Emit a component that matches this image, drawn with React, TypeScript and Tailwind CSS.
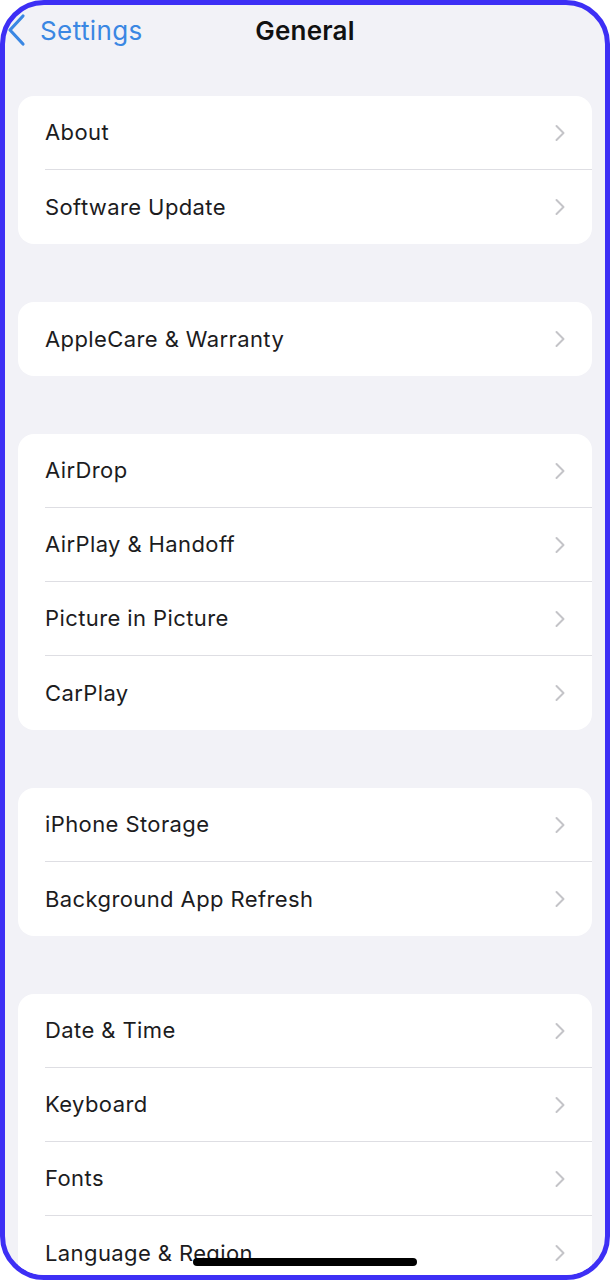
import React from 'react';

const groups: string[][] = [
  ['About', 'Software Update'],
  ['AppleCare & Warranty'],
  ['AirDrop', 'AirPlay & Handoff', 'Picture in Picture', 'CarPlay'],
  ['iPhone Storage', 'Background App Refresh'],
  ['Date & Time', 'Keyboard', 'Fonts', 'Language & Region'],
];

function Chevron() {
  return (
    <svg width="12" height="18" viewBox="0 0 12 18" fill="none">
      <path d="M2.5 2 L9.5 9 L2.5 16" stroke="#c4c4c8" strokeWidth="2" strokeLinecap="round" strokeLinejoin="round" />
    </svg>
  );
}

export default function App() {
  return (
    <div className="h-[1280px] w-[610px] bg-white font-['Inter',sans-serif]">
      <div className="relative flex h-full flex-col overflow-hidden rounded-[44px] border-[5px] border-[#3d2ff5] bg-[#f2f2f7]">
        {/* Nav bar */}
        <div className="grid h-[50px] shrink-0 grid-cols-[1fr_auto_1fr] items-center">
          <div className="flex items-center">
            <svg width="22" height="34" viewBox="0 0 22 34" fill="none" className="ml-[1px]">
              <path d="M17 3 L4 17 L17 31" stroke="#3a87e3" strokeWidth="3.2" strokeLinecap="round" strokeLinejoin="round" />
            </svg>
            <span className="ml-[12px] text-[26px] tracking-[0.4px] text-[#3a87e3]">Settings</span>
          </div>
          <h1 className="text-[26px] font-semibold tracking-[0.2px] text-[#111]">General</h1>
          <div />
        </div>

        <div className="mt-[41px] flex shrink-0 flex-col gap-[58px] px-[13px]">
          {groups.map((rows, gi) => (
            <div key={gi} className="shrink-0 overflow-hidden rounded-[16px] bg-white">
              {rows.map((label, ri) => (
                <div key={label} className="pl-[27px]">
                  <div
                    className={
                      ri < rows.length - 1
                        ? 'flex h-[74px] items-center justify-between border-b border-[#dedee3] pr-[26px]'
                        : 'flex h-[74px] items-center justify-between pr-[26px]'
                    }
                  >
                    <span className="text-[22px] tracking-[0.4px] text-[#1c1c1e]">{label}</span>
                    <Chevron />
                  </div>
                </div>
              ))}
            </div>
          ))}
        </div>

        {/* Home indicator */}
        <div className="absolute left-[188px] top-[1253px] h-[8px] w-[224px] rounded-full bg-black" />
      </div>
    </div>
  );
}
